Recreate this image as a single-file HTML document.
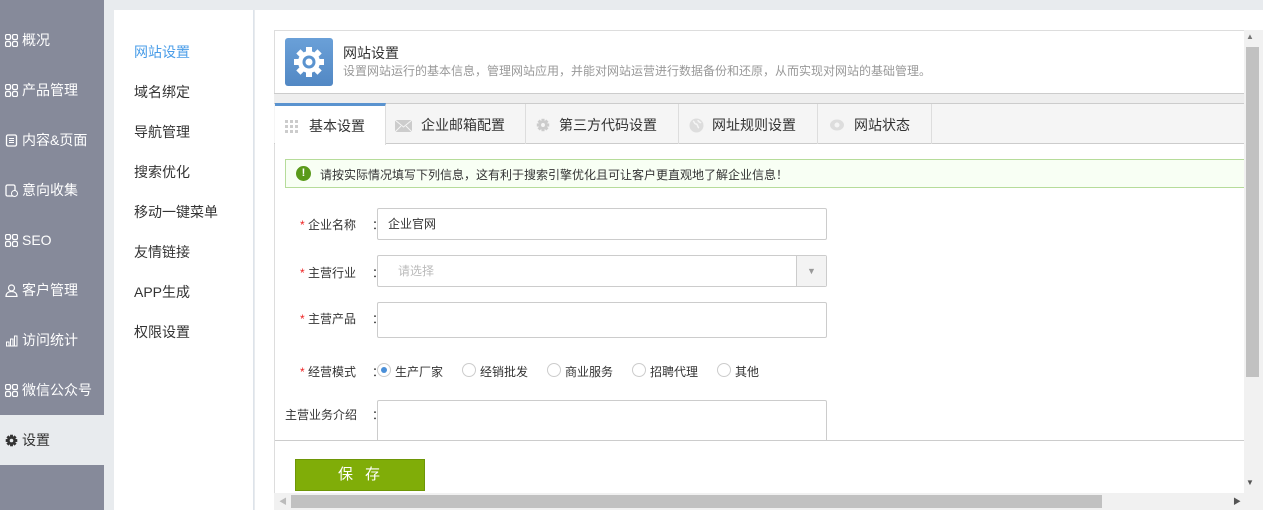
<!DOCTYPE html>
<html><head><meta charset="utf-8"><style>
*{margin:0;padding:0;box-sizing:border-box}
body{width:1263px;height:510px;overflow:hidden;background:#e8ebee;font-family:"Liberation Sans","Noto Sans CJK SC",sans-serif;font-size:13px;color:#333;position:relative}
.abs{position:absolute}
.side{left:0;top:0;width:104px;height:510px;background:#868a9a}
.side div{position:absolute;left:0;width:104px;height:50px;line-height:50px;color:#fff;font-size:14px;padding-left:22px}
.side div svg{position:absolute;left:5px;top:19px}
.side .on{background:#e8ebee;color:#333}
.sub{left:114px;top:10px;width:140px;height:500px;background:#fff;border-right:1px solid #dde3ea}
.sub div{position:absolute;left:20px;font-size:14px;color:#333}
.main{left:255px;top:10px;width:1008px;height:500px;background:#fff}
.lbl{position:absolute;font-size:12px;color:#333}
.lbl b{color:#e22;font-weight:normal}
.lbl i{font-style:normal;position:absolute;left:72px}
.inp{position:absolute;border:1px solid #ccc;border-radius:2px;background:#fff;font-size:12px}
.rad{position:absolute;top:363px;width:14px;height:14px;border:1px solid #ccc;border-radius:50%}
.rt{position:absolute;top:363px;font-size:12px}
.tab{position:absolute;top:104px;height:40px;line-height:42px;font-size:14px;border-right:1px solid #ddd;color:#333}
.tab svg{position:absolute;top:14px}
</style></head><body>
<svg width="0" height="0" style="position:absolute"><defs>
<g id="g4"><rect x="0" y="0" width="5" height="5" rx="1.5" fill="none" stroke="#fff" stroke-width="1.3"/><rect x="7" y="0" width="5" height="5" rx="1.5" fill="none" stroke="#fff" stroke-width="1.3"/><rect x="0" y="7" width="5" height="5" rx="1.5" fill="none" stroke="#fff" stroke-width="1.3"/><rect x="7" y="7" width="5" height="5" rx="1.5" fill="none" stroke="#fff" stroke-width="1.3"/></g>
</defs></svg>
<div class="abs side">
<div style="top:15px"><svg width="13" height="13" viewBox="-0.5 -0.5 13 13"><use href="#g4"/></svg>概况</div>
<div style="top:65px"><svg width="13" height="13" viewBox="-0.5 -0.5 13 13"><use href="#g4"/></svg>产品管理</div>
<div style="top:115px"><svg width="13" height="13" viewBox="0 0 13 13"><rect x="1.5" y="1" width="10" height="11" rx="1.5" fill="none" stroke="#fff" stroke-width="1.3"/><path d="M4 4.5h5M4 6.5h5M4 8.5h5" stroke="#fff"/></svg>内容&amp;页面</div>
<div style="top:165px"><svg width="13" height="13" viewBox="0 0 13 13"><rect x="1" y="1" width="9" height="11" rx="1.5" fill="none" stroke="#fff" stroke-width="1.3"/><circle cx="9.5" cy="9.5" r="3" fill="#868a9a" stroke="#fff"/></svg>意向收集</div>
<div style="top:215px"><svg width="13" height="13" viewBox="-0.5 -0.5 13 13"><use href="#g4"/></svg>SEO</div>
<div style="top:265px"><svg width="13" height="13" viewBox="0 0 13 13"><circle cx="6.5" cy="4" r="3" fill="none" stroke="#fff" stroke-width="1.2"/><path d="M1 12.5c0-3.5 2.5-5 5.5-5s5.5 1.5 5.5 5z" fill="none" stroke="#fff" stroke-width="1.2"/></svg>客户管理</div>
<div style="top:315px"><svg width="13" height="13" viewBox="0 0 13 13"><path d="M1 12h11" stroke="#fff"/><rect x="1.5" y="8" width="2.5" height="4" fill="none" stroke="#fff"/><rect x="5.5" y="5" width="2.5" height="7" fill="none" stroke="#fff"/><rect x="9.5" y="2" width="2.5" height="10" fill="none" stroke="#fff"/></svg>访问统计</div>
<div style="top:365px"><svg width="13" height="13" viewBox="-0.5 -0.5 13 13"><use href="#g4"/></svg>微信公众号</div>
<div class="on" style="top:415px"><svg width="13" height="13" viewBox="0 0 36 36"><g fill="#333"><rect x="14" y="2" width="8" height="32"/><rect x="2" y="14" width="32" height="8"/><rect x="14" y="2" width="8" height="32" transform="rotate(45 18 18)"/><rect x="14" y="2" width="8" height="32" transform="rotate(-45 18 18)"/><circle cx="18" cy="18" r="12"/></g><circle cx="18" cy="18" r="5" fill="#e8ebee"/></svg>设置</div>
</div>
<div class="abs sub">
<div style="top:32px;color:#4a9de8">网站设置</div>
<div style="top:72px">域名绑定</div>
<div style="top:112px">导航管理</div>
<div style="top:152px">搜索优化</div>
<div style="top:192px">移动一键菜单</div>
<div style="top:232px">友情链接</div>
<div style="top:272px">APP生成</div>
<div style="top:312px">权限设置</div>
</div>
<div class="abs main"></div>
<div class="abs" style="left:274px;top:30px;width:971px;height:465px;border-left:1px solid #ddd;border-top:1px solid #ddd;background:#fff"></div>
<div class="abs" style="left:285px;top:38px;width:48px;height:48px;border-radius:3px;background:linear-gradient(#6aa0d8,#5288c4)"></div>
<svg class="abs" style="left:291px;top:44px" width="36" height="36" viewBox="0 0 36 36"><g fill="#fff"><circle cx="18" cy="18" r="11"/><rect x="15" y="3" width="6" height="30"/><rect x="3" y="15" width="30" height="6"/><rect x="15" y="3" width="6" height="30" transform="rotate(45 18 18)"/><rect x="15" y="3" width="6" height="30" transform="rotate(-45 18 18)"/></g><circle cx="18" cy="18" r="6.5" fill="#5a93cf"/><circle cx="18" cy="18" r="3.5" fill="#fff"/></svg>
<div class="abs" style="left:343px;top:43px;font-size:14px;color:#333">网站设置</div>
<div class="abs" style="left:343px;top:62px;font-size:12px;color:#999">设置网站运行的基本信息，管理网站应用，并能对网站运营进行数据备份和还原，从而实现对网站的基础管理。</div>
<div class="abs" style="left:274px;top:93px;width:971px;height:11px;background:#eee;border-top:1px solid #ccc;border-bottom:1px solid #ccc"></div>
<div class="abs" style="left:274px;top:104px;width:971px;height:40px;background:#f5f5f5;border-bottom:1px solid #ccc"></div>
<div class="tab" style="left:275px;width:111px;background:#fff;border-top:3px solid #5a93cf;top:103px;height:42px;line-height:40px;padding-left:34px"><svg style="left:10px;top:14px" width="13" height="13" viewBox="0 0 13 13" fill="#ccc"><rect x="0" y="0" width="3" height="3"/><rect x="5" y="0" width="3" height="3"/><rect x="10" y="0" width="3" height="3"/><rect x="0" y="5" width="3" height="3"/><rect x="5" y="5" width="3" height="3"/><rect x="10" y="5" width="3" height="3"/><rect x="0" y="10" width="3" height="3"/><rect x="5" y="10" width="3" height="3"/><rect x="10" y="10" width="3" height="3"/></svg>基本设置</div>
<div class="tab" style="left:386px;width:140px;padding-left:35px"><svg style="left:9px;top:16px" width="17" height="12" viewBox="0 0 17 12"><rect width="17" height="12" fill="#ccc"/><path d="M0 0l8.5 7L17 0M0 12l6-6M17 12l-6-6" stroke="#f5f5f5" fill="none"/></svg>企业邮箱配置</div>
<div class="tab" style="left:526px;width:153px;padding-left:33px"><svg style="left:10px;top:14px" width="14" height="14" viewBox="0 0 36 36"><g fill="#ccc"><rect x="14" y="2" width="8" height="32"/><rect x="2" y="14" width="32" height="8"/><rect x="14" y="2" width="8" height="32" transform="rotate(45 18 18)"/><rect x="14" y="2" width="8" height="32" transform="rotate(-45 18 18)"/><circle cx="18" cy="18" r="12"/></g><circle cx="18" cy="18" r="5" fill="#f5f5f5"/></svg>第三方代码设置</div>
<div class="tab" style="left:679px;width:139px;padding-left:33px"><svg style="left:10px;top:14px" width="15" height="15" viewBox="0 0 15 15"><circle cx="7.5" cy="7.5" r="7" fill="#ddd"/><path d="M4 3c2 1 1 3 3 3s1 3 3 4M9 2c0 2 2 2 3 3" stroke="#f5f5f5" stroke-width="1.5" fill="none"/></svg>网址规则设置</div>
<div class="tab" style="left:818px;width:114px;padding-left:36px"><svg style="left:12px;top:15px" width="14" height="12" viewBox="0 0 14 12"><ellipse cx="7" cy="6" rx="7" ry="5.5" fill="#ddd"/><circle cx="7" cy="6" r="2.5" fill="#f5f5f5"/></svg>网站状态</div>
<div class="abs" style="left:285px;top:159px;width:960px;height:29px;background:#f8fff4;border:1px solid #b6dc9a;border-right:none"></div>
<div class="abs" style="left:296px;top:166px;width:15px;height:15px;border-radius:50%;background:#5a9a1a;color:#fff;font-size:11px;font-weight:bold;text-align:center;line-height:15px">!</div>
<div class="abs" style="left:320px;top:166px;font-size:12px">请按实际情况填写下列信息，这有利于搜索引擎优化且可让客户更直观地了解企业信息！</div>
<div class="lbl" style="left:300px;top:216px"><b>*</b> 企业名称<i>：</i></div>
<div class="inp" style="left:377px;top:208px;width:450px;height:32px;line-height:30px;padding-left:10px">企业官网</div>
<div class="lbl" style="left:300px;top:264px"><b>*</b> 主营行业<i>：</i></div>
<div class="inp" style="left:377px;top:255px;width:450px;height:32px;line-height:30px;padding-left:20px;color:#bbb">请选择</div>
<div class="abs" style="left:796px;top:256px;width:30px;height:30px;background:#f3f3f3;border-left:1px solid #ccc;color:#999;text-align:center;line-height:30px;font-size:9px">▼</div>
<div class="lbl" style="left:300px;top:310px"><b>*</b> 主营产品<i>：</i></div>
<div class="inp" style="left:377px;top:302px;width:450px;height:36px"></div>
<div class="lbl" style="left:300px;top:363px"><b>*</b> 经营模式<i>：</i></div>
<div class="rad" style="left:377px"><div style="margin:3px;width:6px;height:6px;border-radius:50%;background:#4a8fd8"></div></div>
<div class="rt" style="left:395px">生产厂家</div>
<div class="rad" style="left:462px"></div><div class="rt" style="left:480px">经销批发</div>
<div class="rad" style="left:547px"></div><div class="rt" style="left:565px">商业服务</div>
<div class="rad" style="left:632px"></div><div class="rt" style="left:650px">招聘代理</div>
<div class="rad" style="left:717px"></div><div class="rt" style="left:735px">其他</div>
<div class="lbl" style="left:285px;top:406px">主营业务介绍<i style="left:87px">：</i></div>
<div class="inp" style="left:377px;top:400px;width:450px;height:50px"></div>
<div class="abs" style="left:275px;top:440px;width:970px;height:53px;background:#fff;border-top:1px solid #ccc"></div>
<div class="abs" style="left:295px;top:459px;width:130px;height:32px;background:#80ad08;border:1px solid #6e9607;color:#fff;font-size:15px;text-align:center;line-height:30px;letter-spacing:12px;padding-left:10px">保存</div>
<div class="abs" style="left:1244px;top:30px;width:19px;height:463px;background:#f1f1f1"></div>
<div class="abs" style="left:1246px;top:47px;width:13px;height:330px;background:#c1c1c1"></div>
<div class="abs" style="left:1246px;top:32px;font-size:8px;color:#777">▲</div>
<div class="abs" style="left:1246px;top:478px;font-size:8px;color:#555">▼</div>
<div class="abs" style="left:274px;top:493px;width:989px;height:17px;background:#f1f1f1"></div>
<div class="abs" style="left:291px;top:495px;width:811px;height:13px;background:#c1c1c1"></div>
<div class="abs" style="left:279px;top:496px;font-size:8px;color:#bbb">◀</div>
<div class="abs" style="left:1233px;top:496px;font-size:8px;color:#555">▶</div>
</body></html>
